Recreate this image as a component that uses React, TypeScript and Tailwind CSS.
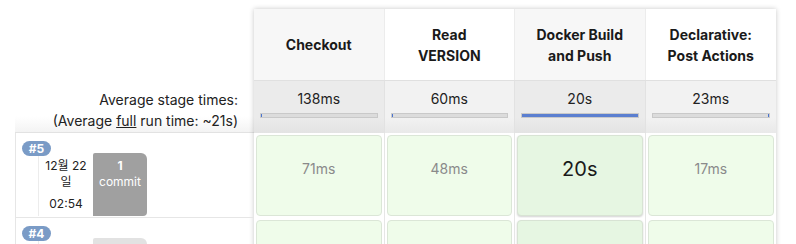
import React from "react";

const stages = [
  { name: ["Checkout"], avg: "138ms", fill: "left-small", hdr: "bg-[#f7f7f7]", avgBg: "bg-[linear-gradient(to_bottom,#ebebeb_70%,#e3e3e3)]" },
  { name: ["Read", "VERSION"], avg: "60ms", fill: "left-small", hdr: "bg-white", avgBg: "bg-[linear-gradient(to_bottom,#f2f2f2_70%,#e9e9e9)]" },
  { name: ["Docker Build", "and Push"], avg: "20s", fill: "full", hdr: "bg-[#f7f7f7]", avgBg: "bg-[linear-gradient(to_bottom,#ebebeb_70%,#e3e3e3)]" },
  { name: ["Declarative:", "Post Actions"], avg: "23ms", fill: "right-small", hdr: "bg-white", avgBg: "bg-[linear-gradient(to_bottom,#f2f2f2_70%,#e9e9e9)]" },
];

const runs = [
  { id: "#5", date: "12월 22 일", time: "02:54", commit: "bg-[#a0a0a0]", cells: ["71ms", "48ms", "20s", "17ms"], show: true },
  { id: "#4", date: "", time: "", commit: "bg-[#e2e2e2]", cells: ["", "", "", ""], show: false },
];

function Bar({ fill }: { fill: string }) {
  return (
    <div className="mx-[6px] mt-[4px] h-[5px] bg-[#dcdcdc] border border-[#c9c9c9] flex">
      {fill === "full" && <div className="flex-1 bg-[#5b7fd0]" />}
      {fill === "left-small" && <div className="w-[1px] bg-[#4a74d0]" />}
      {fill === "right-small" && (
        <>
          <div className="flex-1" />
          <div className="w-[1px] bg-[#4a74d0]" />
        </>
      )}
    </div>
  );
}

export default function App() {
  return (
    <div className="w-[796px] h-[244px] overflow-hidden bg-white pl-[15px] pt-[9px] flex items-start font-['Inter','Liberation_Sans','Noto_Sans_CJK_KR',sans-serif] text-[#1a1a1a]">
      {/* left column */}
      <div className="w-[239px] flex flex-col shrink-0">
        <div className="h-[71px] shrink-0" />
        <div className="h-[53px] shrink-0 border-b border-[#e2e2e2] bg-[linear-gradient(to_bottom,#ffffff_70%,#f3f3f3)] flex flex-col items-end pr-[16px] pt-[9px] text-[14px] leading-[21px] text-[#222]">
          <div>Average stage times:</div>
          <div>
            (Average <span className="underline">full</span> run time: ~21s)
          </div>
        </div>
        {runs.map((r) => (
          <div key={r.id} className="relative h-[85px] shrink-0 border-l border-b border-[#e6e6e6] pl-[22px] pt-[20px] flex">
            <div className="absolute left-[6px] top-[8px] w-[29px] h-[15px] rounded-full bg-[#7a9bc6] text-white text-[12px] font-bold leading-[15px] text-center">
              {r.id}
            </div>
            <div className="w-[55px] h-[63px] border-l border-[#ececec] bg-white text-center text-[12px] leading-[16px] text-[#222] pt-[5px] px-[2px] flex flex-col">
              {r.show && (
                <>
                  <div>{r.date}</div>
                  <div className="mt-[6px]">{r.time}</div>
                </>
              )}
            </div>
            <div className={`w-[54px] h-[63px] ${r.commit} rounded-tr-[6px] rounded-br-[4px] rounded-tl-[2px] text-white text-center text-[12px] leading-[16px] pt-[5px]`}>
              {r.show && (
                <>
                  <div className="font-bold">1</div>
                  <div>commit</div>
                </>
              )}
            </div>
          </div>
        ))}
      </div>
      {/* table */}
      <div className="w-[522px] shrink-0 flex flex-col shadow-[0_0_5px_rgba(0,0,0,0.22)]">
        <div className="grid grid-cols-4 h-[71px] shrink-0">
          {stages.map((s, i) => (
            <div
              key={i}
              className={`${s.hdr} ${i < 3 ? "border-r border-[#ececec]" : ""} flex flex-col items-center justify-center text-[14px] font-bold leading-[21px] text-center`}
            >
              {s.name.map((n) => (
                <div key={n}>{n}</div>
              ))}
            </div>
          ))}
        </div>
        <div className="grid grid-cols-4 h-[53px] shrink-0 border-t border-[#e0e0e0]">
          {stages.map((s, i) => (
            <div key={i} className={`${s.avgBg} ${i < 3 ? "border-r border-[#e2e2e2]" : ""} pt-[8px] flex flex-col`}>
              <div className="text-center text-[14px] leading-[20px] text-[#222]">{s.avg}</div>
              <Bar fill={s.fill} />
            </div>
          ))}
        </div>
        {runs.map((r) => (
          <div key={r.id} className="grid grid-cols-4 h-[85px] shrink-0">
            {r.cells.map((c, i) => (
              <div key={i} className={`${i < 3 ? "border-r border-[#e6e6e6]" : ""} bg-white px-[2px] pt-[2px] pb-[2px]`}>
                {i === 2 ? (
                  <div className="h-[81px] rounded-[4px] border border-[#d8e3d4] bg-[#e6f6e2] shadow-[0_1px_2px_rgba(0,0,0,0.18)] text-center text-[20px] leading-[24px] pt-[21px] text-[#1a1a1a]">
                    {c}
                  </div>
                ) : (
                  <div className="h-[81px] rounded-[4px] border border-[#dbe6d7] bg-[#effcea] text-center text-[14px] leading-[20px] pt-[23px] text-[#8a8a8a]">
                    {c}
                  </div>
                )}
              </div>
            ))}
          </div>
        ))}
      </div>
    </div>
  );
}
